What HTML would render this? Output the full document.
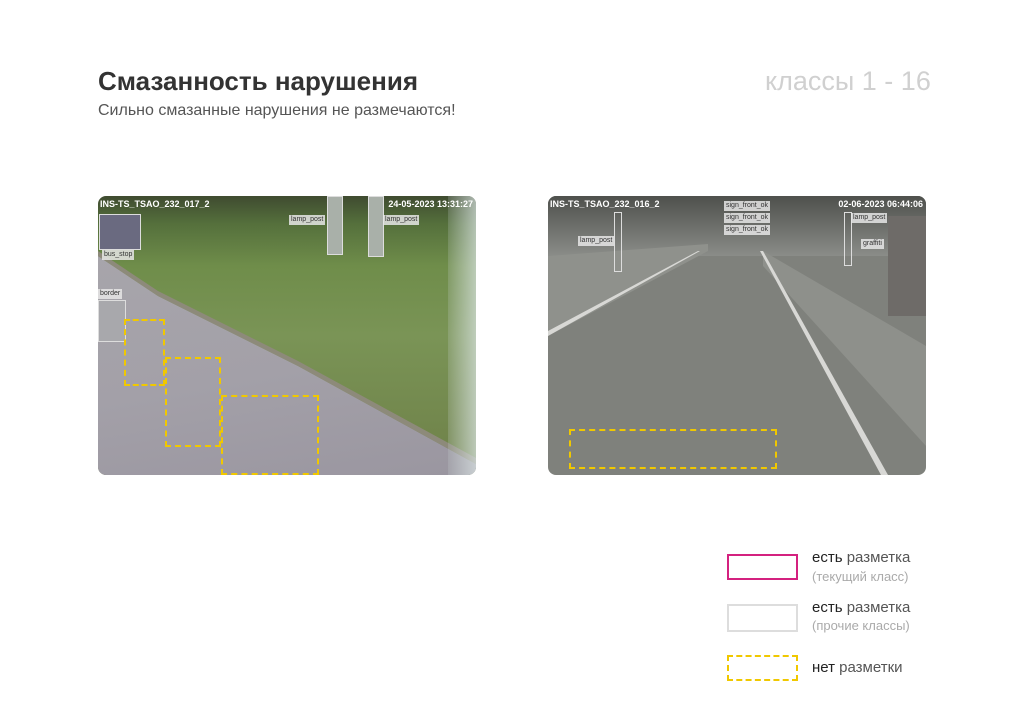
<!DOCTYPE html>
<html><head><meta charset="utf-8"><style>
body{margin:0;width:1024px;height:723px;background:#fff;position:relative;overflow:hidden;font-family:"Liberation Sans",sans-serif}
.a{position:absolute}
.img{position:absolute;top:196px;width:378px;height:279px;border-radius:8px;overflow:hidden}
.lbl{position:absolute;background:rgba(230,230,230,.85);font-size:7px;color:#333;padding:1px 2px;line-height:8px}
.box{position:absolute;border:1px solid #ddd}
.dash{position:absolute;border:2px dashed #f0c800;box-sizing:border-box}
.hd{position:absolute;color:#fff;font-size:9px;font-weight:bold;top:3px}
</style></head><body>
<div class="a" style="left:98px;top:66px;font-size:26px;font-weight:bold;color:#333">Смазанность нарушения</div>
<div class="a" style="left:98px;top:102px;font-size:16px;color:#555">Сильно смазанные нарушения не размечаются!</div>
<div class="a" style="left:765px;top:66px;font-size:27px;color:#d0d0d0">классы 1 - 16</div>

<div class="img" style="left:98px;background:linear-gradient(180deg,#3f4b30 0%,#55703c 10%,#6f8d4a 25%,#7a9456 50%,#6e8048 100%)">
 <div class="a" style="left:0;top:0;width:378px;height:279px;background:linear-gradient(170deg,#a9a7ac 0%,#a3a0a8 60%,#9a96a0 100%);clip-path:polygon(0 60px,60px 100px,200px 170px,378px 268px,378px 279px,0 279px)"></div>
 <div class="a" style="left:0;top:0;width:378px;height:279px;background:#8d8a7a;clip-path:polygon(0 55px,60px 95px,200px 165px,378px 262px,378px 268px,200px 170px,60px 100px,0 60px)"></div>
 <div class="a" style="left:350px;top:0;width:28px;height:279px;background:linear-gradient(90deg,rgba(200,210,210,.2),rgba(220,230,230,.7))"></div>
 <div class="hd" style="left:2px">INS-TS_TSAO_232_017_2</div>
 <div class="hd" style="right:3px">24-05-2023 13:31:27</div>
 <div class="box" style="left:1px;top:18px;width:40px;height:34px;background:#6a6a80"></div>
 <div class="lbl" style="left:4px;top:54px">bus_stop</div>
 <div class="box" style="left:229px;top:0;width:14px;height:57px;background:#a9b0a9"></div>
 <div class="lbl" style="left:191px;top:19px">lamp_post</div>
 <div class="box" style="left:270px;top:0;width:14px;height:59px;background:#a9b0a9"></div>
 <div class="lbl" style="left:285px;top:19px">lamp_post</div>
 <div class="lbl" style="left:0;top:93px">border</div>
 <div class="box" style="left:0;top:104px;width:26px;height:40px;background:#a8a8ac"></div>
 <div class="dash" style="left:26px;top:123px;width:41px;height:67px"></div>
 <div class="dash" style="left:67px;top:161px;width:56px;height:90px"></div>
 <div class="dash" style="left:123px;top:199px;width:98px;height:80px"></div>
</div>

<div class="img" style="left:548px;background:#7f817c">
 <div class="a" style="left:0;top:0;width:378px;height:60px;background:linear-gradient(#4e504c,#8a8c88)"></div>
 <div class="a" style="left:0;top:0;width:378px;height:279px;background:#8f918c;clip-path:polygon(0 60px,160px 48px,160px 55px,0 140px)"></div>
 <div class="a" style="left:0;top:0;width:378px;height:279px;background:#8e908b;clip-path:polygon(215px 55px,378px 150px,378px 250px,215px 70px)"></div>
 <div class="a" style="left:340px;top:20px;width:38px;height:100px;background:#6e6b68"></div>
 <div class="a" style="left:0;top:0;width:378px;height:279px;background:#d8d8d5;clip-path:polygon(0 135px,150px 55px,152px 55px,0 140px)"></div>
 <div class="a" style="left:0;top:0;width:378px;height:279px;background:#d8d8d5;clip-path:polygon(212px 55px,215px 55px,340px 279px,333px 279px)"></div>
 <div class="hd" style="left:2px">INS-TS_TSAO_232_016_2</div>
 <div class="hd" style="right:3px">02-06-2023 06:44:06</div>
 <div class="lbl" style="left:176px;top:5px">sign_front_ok</div>
 <div class="lbl" style="left:176px;top:17px">sign_front_ok</div>
 <div class="lbl" style="left:176px;top:29px">sign_front_ok</div>
 <div class="box" style="left:66px;top:16px;width:6px;height:58px"></div>
 <div class="lbl" style="left:30px;top:40px">lamp_post</div>
 <div class="box" style="left:296px;top:16px;width:6px;height:52px"></div>
 <div class="lbl" style="left:303px;top:17px">lamp_post</div>
 <div class="lbl" style="left:313px;top:43px">graffiti</div>
 <div class="dash" style="left:21px;top:233px;width:208px;height:40px"></div>
</div>

<div class="a" style="left:727px;top:554px;width:67px;height:22px;border:2px solid #d4217f"></div>
<div class="a" style="left:812px;top:549px;font-size:15px;color:#555"><span style="color:#222">есть</span> разметка</div>
<div class="a" style="left:812px;top:569px;font-size:13px;color:#aaa">(текущий класс)</div>
<div class="a" style="left:727px;top:604px;width:67px;height:24px;border:2px solid #ddd"></div>
<div class="a" style="left:812px;top:599px;font-size:15px;color:#555"><span style="color:#222">есть</span> разметка</div>
<div class="a" style="left:812px;top:618px;font-size:13px;color:#aaa">(прочие классы)</div>
<div class="a" style="left:727px;top:655px;width:67px;height:22px;border:2px dashed #f0c800"></div>
<div class="a" style="left:812px;top:659px;font-size:15px;color:#555"><span style="color:#222">нет</span> разметки</div>
</body></html>
